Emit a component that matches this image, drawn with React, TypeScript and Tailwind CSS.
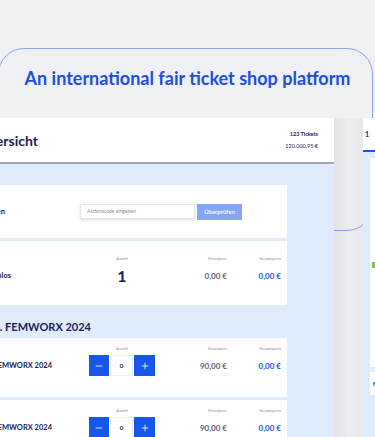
import { Minus, Plus } from "lucide-react";

function Labels() {
  return (
    <div className="flex text-[4px] leading-[5px] text-[#8b909b]">
      <div className="ml-[89px] w-[66px] text-center">Anzahl</div>
      <div className="w-[72px] text-right">Einzelpreis</div>
      <div className="w-[54px] text-right">Gesamtpreis</div>
    </div>
  );
}

function Prices({ einzel, gesamt }: { einzel: string; gesamt: string }) {
  return (
    <>
      <div className="w-[72px] text-right text-[8px] font-bold text-[#5d6270]">{einzel}</div>
      <div className="w-[54px] text-right text-[8px] font-bold text-[#2154d6]">{gesamt}</div>
    </>
  );
}

function Name({ children, w }: { children: string; w: string }) {
  return (
    <div className={`flex shrink-0 justify-end whitespace-nowrap text-[7.5px] font-bold text-[#18205c] ${w}`}>
      {children}
    </div>
  );
}

function Stepper() {
  return (
    <div className="flex h-[21px] w-[66px] gap-[1px]">
      <button className="flex w-[20px] items-center justify-center bg-[#1656e8] text-white">
        <Minus size={10} strokeWidth={2} />
      </button>
      <div className="flex flex-1 items-center justify-center border border-[#eceef2] bg-white text-[6px] font-bold text-[#18205c]">
        0
      </div>
      <button className="flex w-[21px] items-center justify-center bg-[#1656e8] text-white">
        <Plus size={10} strokeWidth={2} />
      </button>
    </div>
  );
}

function TicketRow({ className }: { className: string }) {
  return (
    <div className={`bg-white pt-[8px] ${className}`}>
      <Labels />
      <div className="mt-[4px] flex items-center">
        <Name w="w-[52px]">Tagesticket FEMWORX 2024</Name>
        <div className="ml-[37px] shrink-0">
          <Stepper />
        </div>
        <Prices einzel="90,00 €" gesamt="0,00 €" />
      </div>
    </div>
  );
}

export default function App() {
  return (
    <div className="relative h-[437px] w-[375px] overflow-hidden bg-[#eff1f5] font-['Lato',sans-serif]">
      <div className="absolute left-[-2px] top-[48px] h-[183px] w-[375px] rounded-[26px] border border-[#8fa5e8]" />

      <div className="relative flex flex-col">
        <h1 className="pt-[69px] text-center text-[18px] font-bold leading-[18px] text-[#1c4de6]">
          An international fair ticket shop platform
        </h1>

        <div className="mt-[31px] flex">
          {/* Hauptpanel */}
          <div className="h-[330px] w-[334px] shrink-0 bg-[#dfecfc]">
            <div className="flex h-[46px] items-center justify-between border-b-2 border-[#a4a8b1] bg-white pr-[16px]">
              <div className="flex w-[38px] justify-end whitespace-nowrap text-[14px] font-bold text-[#18205c]">
                Übersicht
              </div>
              <div className="flex flex-col items-end gap-[6px] text-[5.5px] leading-[6px] text-[#18205c]">
                <span className="font-bold">123 Tickets</span>
                <span>120.000,95 €</span>
              </div>
            </div>

            <div className="flex flex-col pr-[47px] pt-[21px]">
              <div className="flex h-[53px] items-center bg-white">
                <Name w="w-[5px]">Aktionscode einlösen</Name>
                <div className="ml-[75px] flex h-[15px] w-[115px] items-center border border-[#e3e6ec] bg-white pl-[6px] text-[5px] text-[#8a8f99] shadow-sm">
                  Aktionscode eingeben
                </div>
                <button className="ml-[2px] h-[16px] w-[45px] bg-[#84a6f4] text-[6px] font-semibold text-white">
                  Überprüfen
                </button>
              </div>

              <div className="mt-[3px] h-[64px] bg-white pt-[15px]">
                <Labels />
                <div className="mt-[5px] flex items-center">
                  <Name w="w-[11px]">Aktionsticket kostenlos</Name>
                  <div className="ml-[78px] w-[66px] text-center text-[16px] font-bold leading-[20px] text-[#18205c]">
                    1
                  </div>
                  <Prices einzel="0,00 €" gesamt="0,00 €" />
                </div>
              </div>

              <div className="flex h-[33px] items-end pb-[6px]">
                <div className="flex w-[91px] justify-end whitespace-nowrap text-[11px] font-bold leading-[11px] text-[#18205c]">
                  Tickets inkl. FEMWORX 2024
                </div>
              </div>

              <TicketRow className="h-[59px]" />
              <TicketRow className="mt-[3px] h-[59px]" />
            </div>
          </div>

          {/* Schatten zwischen den Panels */}
          <div className="w-[29px] shrink-0 bg-gradient-to-r from-black/[0.06] via-black/[0.02] to-black/[0.035]" />

          {/* rechtes Panel */}
          <div className="h-[330px] w-[200px] shrink-0 bg-[#dfecfc]">
            <div className="flex h-[32px] items-center gap-[14px] bg-white pl-[2px] text-[7px] font-bold text-[#18205c]">
              <span>1</span>
              <span>Teilnehmer</span>
            </div>
            <div className="h-[2px] bg-[#1f55e0]" />
            <div className="ml-[7px] mt-[6px] h-[209px] bg-white pt-[104px]">
              <div className="ml-[2px] h-[6px] w-[6px] bg-[#8bc34a]" />
            </div>
            <div className="ml-[7px] mt-[5px] flex h-[23px] items-center bg-white pl-[3px] text-[6px] font-bold text-[#18205c]">
              Nachweis
            </div>
          </div>
        </div>
      </div>
    </div>
  );
}
